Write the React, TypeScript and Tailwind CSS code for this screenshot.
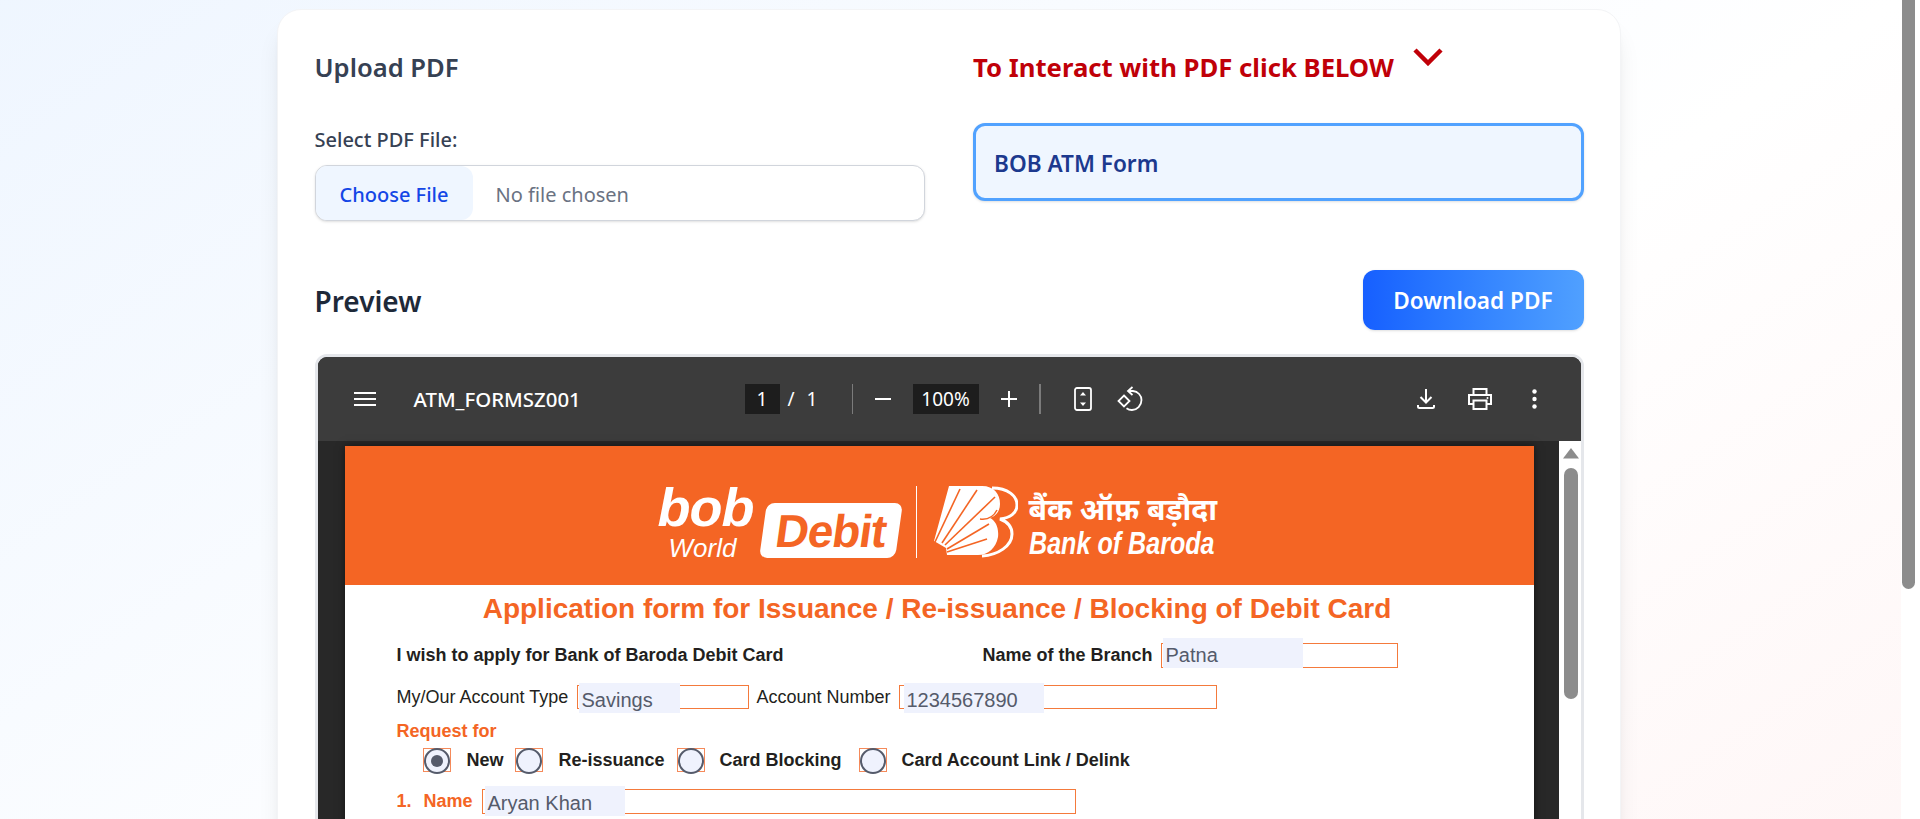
const ui = "font-['Noto_Sans','Open_Sans',sans-serif]";
const doc = "font-['Liberation_Sans',Arial,sans-serif]";

const Field = ({ box, fill, text }: { box: string; fill: string; text: string }) => (
  <div className={`relative border border-[#f47a3c] ${box}`}>
    <div className={`absolute flex items-end bg-[#eff2fd] pl-[3px] text-[20px] font-normal leading-[26px] text-[#555b6b] ${fill}`}>
      {text}
    </div>
  </div>
);

const Radio = ({ checked }: { checked?: boolean }) => (
  <div className="relative h-[24px] w-[28px] shrink-0 border border-[#f58a5a]">
    <div className="absolute -top-[1px] left-0 flex h-[26px] w-[26px] items-center justify-center rounded-[50%] border-2 border-[#555b6b] bg-[#eff2fd]">
      {checked ? <div className="h-[12px] w-[12px] rounded-full bg-[#555b6b]" /> : null}
    </div>
  </div>
);

const BobEmblem = () => (
  <svg width="84" height="72" viewBox="0 0 84 72" className="shrink-0">
    <path d="M15 0H48C60 0 66 8 66 18C66 25 62 30 56 32C62 35 65 42 64 51C62 62 54 69 44 69H13L12 62L0 55Z" fill="#fff" />
    <path d="M58 2C74 2 83 10 83 19C83 27 76 32 66 33C74 36 78 41 78 48C78 60 64 69 48 70" fill="none" stroke="#fff" strokeWidth="3" />
    <g stroke="#f46524" strokeWidth="1.6" fill="none">
      <path d="M26 3L1 56" />
      <path d="M43 4L8 57" />
      <path d="M61 11L11 59" />
      <path d="M55 38L13 63" />
      <path d="M53 53L13 66" />
    </g>
    <path d="M46 33C54 34 60 30 63 24" stroke="#f46524" strokeWidth="1.5" fill="none" />
  </svg>
);

const Toolbar = () => (
  <div className={`flex h-[84px] items-center bg-[#3c3c3c] pl-[36px] text-white ${ui}`}>
    <svg width="22" height="16" viewBox="0 0 22 16" className="shrink-0">
      <path d="M0 2H22M0 8H22M0 14H22" stroke="#fff" strokeWidth="2" />
    </svg>
    <div className="ml-[38px] w-[331px] text-[20.4px] font-medium leading-none">ATM_FORMSZ001</div>
    <div className="flex h-[30px] w-[35px] items-center justify-center bg-[#1d1d1d] text-[19px]">1</div>
    <div className="ml-[8px] w-[13px] text-[19px]">/</div>
    <div className="ml-[6px] w-[45px] text-[19px]">1</div>
    <div className="h-[30px] w-[1px] bg-[#7b7b7b]" />
    <svg width="16" height="2" viewBox="0 0 16 2" className="ml-[22px] shrink-0">
      <path d="M0 1H16" stroke="#fff" strokeWidth="2" />
    </svg>
    <div className="ml-[22px] flex h-[30px] w-[66px] items-center justify-center bg-[#1d1d1d] text-[19px]">100%</div>
    <svg width="16" height="16" viewBox="0 0 16 16" className="ml-[22px] shrink-0">
      <path d="M0 8H16M8 0V16" stroke="#fff" strokeWidth="2" />
    </svg>
    <div className="ml-[22px] h-[30px] w-[2px] bg-[#7b7b7b]" />
    <svg width="18" height="24" viewBox="0 0 18 24" className="ml-[33px] shrink-0">
      <rect x="1" y="1" width="16" height="22" rx="2" fill="none" stroke="#fff" strokeWidth="1.8" />
      <path d="M9 5L12 8.5H6ZM9 19L6 15.5H12Z" fill="#fff" />
    </svg>
    <svg width="26" height="26" viewBox="0 0 26 26" className="ml-[25px] shrink-0">
      <path d="M7 9.5L12.5 15L7 20.5L1.5 15Z" fill="none" stroke="#fff" strokeWidth="1.8" />
      <path d="M12 5H16C21 5.5 24.5 9.5 24.5 14C24.5 19.5 20 24 15 24C13 24 11 23.4 9.5 22.3" fill="none" stroke="#fff" strokeWidth="1.8" />
      <path d="M15.5 1L11 5L15.5 9" fill="none" stroke="#fff" strokeWidth="1.8" />
    </svg>
    <svg width="18" height="20" viewBox="0 0 18 20" className="ml-[274px] shrink-0">
      <path d="M9 0V13M3.5 8L9 13.5L14.5 8M1 16V17.5C1 18.3 1.7 19 2.5 19H15.5C16.3 19 17 18.3 17 17.5V16" fill="none" stroke="#fff" strokeWidth="2" />
    </svg>
    <svg width="24" height="22" viewBox="0 0 24 22" className="ml-[33px] shrink-0">
      <path d="M5.5 7V1H18.5V7M5.5 16H1V7H23V16H18.5M5.5 12.5H18.5V21H5.5Z" fill="none" stroke="#fff" strokeWidth="2" />
      <circle cx="19.5" cy="10" r="1" fill="#fff" />
    </svg>
    <svg width="5" height="20" viewBox="0 0 5 20" className="ml-[40px] shrink-0">
      <circle cx="2.5" cy="2.5" r="2.2" fill="#fff" />
      <circle cx="2.5" cy="10" r="2.2" fill="#fff" />
      <circle cx="2.5" cy="17.5" r="2.2" fill="#fff" />
    </svg>
  </div>
);

const PdfPage = () => (
  <div className={`h-[900px] w-[1189px] shrink-0 bg-white shadow-[0_0_8px_rgba(0,0,0,0.5)] ${doc}`}>
    <div className="flex h-[139px] items-start bg-[#f46524] pl-[313px] pt-[40px] text-white">
      <div className="w-[100px] shrink-0">
        <div className="text-[54px] font-bold italic leading-[42px] tracking-[-1px]">bob</div>
        <div className="ml-[11px] mt-[9px] text-[26px] italic leading-[22px]">World</div>
      </div>
      <div className="ml-[5px] mt-[17px] flex h-[55px] w-[136px] shrink-0 -skew-x-[8deg] items-center justify-center rounded-[8px] bg-white">
        <span className="text-[46px] font-bold leading-none tracking-[-1px] text-[#f46524]">Debit</span>
      </div>
      <div className="ml-[17px] h-[72px] w-[1px] shrink-0 bg-white" />
      <div className="ml-[17px] shrink-0">
        <BobEmblem />
      </div>
      <div className="ml-[11px] w-[190px] shrink-0">
        <div className="h-[44px] whitespace-nowrap pt-[4px] font-['Noto_Sans',sans-serif] text-[30px] font-bold leading-[38px]">बैंक ऑफ़ बड़ौदा</div>
        <div className="origin-left scale-x-[0.81] whitespace-nowrap text-[31px] font-bold italic leading-[28px]">Bank of Baroda</div>
      </div>
    </div>
    <div className="flex h-[48px] items-center justify-center pr-[4px] text-[28px] font-bold leading-none text-[#f46524]">
      Application form for Issuance / Re-issuance / Blocking of Debit Card
    </div>
    <div className="flex h-[44px] items-center pl-[52px] text-[18px] font-bold text-[#231f20]">
      <div className="w-[586px]">I wish to apply for Bank of Baroda Debit Card</div>
      <div className="w-[178px]">Name of the Branch</div>
      <Field box="h-[25px] w-[237px]" fill="-top-[6px] left-[1px] h-[30px] w-[140px]" text="Patna" />
    </div>
    <div className="flex h-[40px] items-center pl-[52px] text-[18px] text-[#231f20]">
      <div className="w-[180px]">My/Our Account Type</div>
      <Field box="h-[24px] w-[172px]" fill="-top-[3px] left-[1px] h-[30px] w-[101px]" text="Savings" />
      <div className="ml-[8px] w-[142px]">Account Number</div>
      <Field box="h-[24px] w-[318px]" fill="-top-[3px] left-[4px] h-[30px] w-[140px]" text="1234567890" />
    </div>
    <div className="flex h-[28px] items-center pl-[52px] text-[18px] font-bold text-[#f46524]">Request for</div>
    <div className="flex h-[30px] items-center pl-[78px] text-[18px] font-bold text-[#231f20]">
      <Radio checked />
      <div className="ml-[16px] w-[48px]">New</div>
      <Radio />
      <div className="ml-[16px] w-[118px]">Re-issuance</div>
      <Radio />
      <div className="ml-[15px] w-[139px]">Card Blocking</div>
      <Radio />
      <div className="ml-[15px]">Card Account Link / Delink</div>
    </div>
    <div className="flex h-[52px] items-center pl-[52px] text-[18px] font-bold text-[#f46524]">
      <div className="w-[27px]">1.</div>
      <div className="w-[58px]">Name</div>
      <Field box="h-[25px] w-[594px]" fill="-top-[4px] left-[2px] h-[30px] w-[140px]" text="Aryan Khan" />
    </div>
  </div>
);

const PdfViewer = () => (
  <div className="mt-[24px] h-[900px] overflow-hidden rounded-xl border-[3px] border-[#e5e7eb] bg-[#282828]">
    <Toolbar />
    <div className="flex h-full">
      <div className="flex-1 pl-[27px] pt-[5px]">
        <PdfPage />
      </div>
      <div className="w-[22px] shrink-0 bg-white pl-[4px] pt-[7px]">
        <svg width="16" height="11" viewBox="0 0 16 11">
          <path d="M8 0L16 10.5H0Z" fill="#8c8c8c" />
        </svg>
        <div className="ml-[1px] mt-[9px] h-[231px] w-[14px] rounded-full bg-[#8c8c8c]" />
      </div>
    </div>
  </div>
);

export default function App() {
  return (
    <div className={`flex h-screen w-full overflow-hidden bg-white ${ui}`}>
      <div className="min-w-0 flex-1 overflow-hidden">
        <div className="flex min-h-[1139px] justify-center bg-gradient-to-br from-blue-50 via-white to-red-50 pr-[4px] pt-[9px]">
          <div className="h-fit w-[1344px] rounded-3xl border border-gray-100 bg-white pb-[36px] pl-[37px] pr-[36px] pt-[25px] shadow-xl">
            <div className="grid grid-cols-2 gap-x-12">
              <div>
                <h2 className="h-[64px] pt-[1px] text-[25.6px] font-semibold leading-[64px] text-gray-700">Upload PDF</h2>
                <label className="mt-[27px] block text-[20px] font-medium leading-[28px] text-gray-700">Select PDF File:</label>
                <div className="mt-[11px] flex h-[56px] items-center overflow-hidden rounded-xl border border-gray-300 bg-white pr-[1px] shadow-sm">
                  <div className="flex h-full w-[157px] items-center justify-center rounded-r-xl bg-blue-50 pt-[4px] text-[20px] font-medium text-blue-700">Choose File</div>
                  <div className="ml-[23px] pt-[4px] text-[20px] text-gray-500">No file chosen</div>
                </div>
              </div>
              <div>
                <div className="flex h-[64px] items-start">
                  <h2 className="pt-[1px] text-[25.7px] font-bold leading-[64px] text-[#c00008]">To Interact with PDF click BELOW</h2>
                  <svg width="30" height="18" viewBox="0 0 30 18" className="ml-[19px] mt-[13px]">
                    <path d="M2 2L15 15L28 2" fill="none" stroke="#c00008" strokeWidth="4.5" />
                  </svg>
                </div>
                <div className="mt-[24px] flex h-[78px] items-center rounded-xl border-[3px] border-blue-400 bg-blue-50 px-[18px] pt-[4px] text-[22.6px] font-semibold text-blue-900 shadow-sm">
                  BOB ATM Form
                </div>
              </div>
            </div>
            <div className="mt-[49px] flex h-[60px] items-center justify-between">
              <h2 className="pt-[1px] text-[28px] font-semibold text-gray-800">Preview</h2>
              <button className="h-[60px] w-[221px] rounded-xl bg-gradient-to-r from-[#175fff] to-[#50a0ff] pt-[2px] text-[22.6px] font-semibold text-white shadow-sm">
                Download PDF
              </button>
            </div>
            <PdfViewer />
          </div>
        </div>
      </div>
      <div className="w-[19px] shrink-0 bg-white pl-[1px]">
        <div className="h-[589px] w-[13px] rounded-b-full bg-[#8c8c8c]" />
      </div>
    </div>
  );
}
